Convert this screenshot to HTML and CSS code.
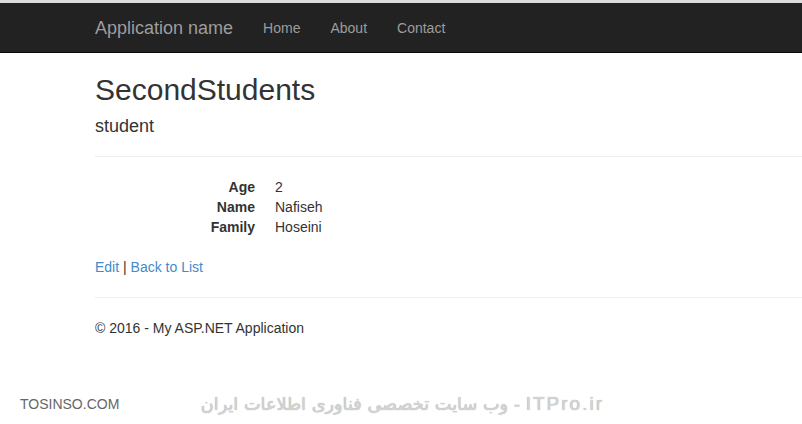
FILE: index.html
```html
<!DOCTYPE html>
<html lang="en">
<head>
  <meta charset="UTF-8" />
  <meta name="viewport" content="width=device-width, initial-scale=1.0"/>
  <title>Details - My ASP.NET Application</title>
  <link rel="stylesheet" href="styles.css">
</head>
<body>
  <div class="top-strip"></div>

  <div class="navbar">
    <div class="container nav-inner">
      <a class="navbar-brand" href="#">Application name</a>
      <ul class="nav">
        <li><a href="#">Home</a></li>
        <li><a href="#">About</a></li>
        <li><a href="#">Contact</a></li>
      </ul>
    </div>
  </div>

  <div class="container body-content">
    <h2>SecondStudents</h2>

    <div>
      <h4>student</h4>
      <hr />
      <dl class="dl-horizontal">
        <dt>Age</dt>
        <dd>2</dd>
        <dt>Name</dt>
        <dd>Nafiseh</dd>
        <dt>Family</dt>
        <dd>Hoseini</dd>
      </dl>
    </div>

    <p>
      <a href="#">Edit</a> |
      <a href="#">Back to List</a>
    </p>

    <hr />
    <footer>
      <p>&copy; 2016 - My ASP.NET Application</p>
    </footer>
  </div>

  <div class="watermark">
    <span class="wm-site">TOSINSO.COM</span>
    <span class="wm-fa" dir="rtl"><span class="wm-latin">ITPro.ir</span> - وب سایت تخصصی فناوری اطلاعات ایران</span>
  </div>
</body>
</html>
```

FILE: styles.css
```css
html, body {
  margin: 0;
  padding: 0;
}

body {
  font-family: "Liberation Sans", Arial, sans-serif;
  font-size: 14px;
  line-height: 20px;
  color: #333;
  background-color: #fff;
  overflow: hidden;
  height: 424px;
  position: relative;
}

a {
  color: #428bca;
  text-decoration: none;
}

.top-strip {
  height: 3px;
  background-color: #dcdcdc;
}

/* page is cut on the right, so the container runs to the edge */
.container {
  margin-left: 80px;
  padding: 0 0 0 15px;
}

/* navbar */
.navbar {
  background-color: #222;
  border-bottom: 1px solid #080808;
  height: 49px;
}

.nav-inner {
  display: flex;
  align-items: center;
}

.navbar-brand {
  color: #9d9d9d;
  font-size: 18px;
  line-height: 20px;
  padding: 15px 15px 14px 0;
}

.nav {
  display: flex;
  list-style: none;
  margin: 0;
  padding: 0;
}

.nav a {
  display: block;
  color: #9d9d9d;
  padding: 15px 15px 14px;
}

/* content */
h2 {
  font-size: 30px;
  font-weight: 500;
  line-height: 33px;
  margin: 20px 0 10px;
}

h4 {
  font-size: 18px;
  font-weight: 500;
  line-height: 20px;
  margin: 10px 0;
}

hr {
  border: 0;
  border-top: 1px solid #eee;
  margin: 20px 0;
}

p {
  margin: 0 0 10px;
}

.dl-horizontal {
  display: grid;
  grid-template-columns: 160px 1fr;
  column-gap: 20px;
  margin: 0 0 20px;
}

.dl-horizontal dt {
  font-weight: bold;
  text-align: right;
}

.dl-horizontal dd {
  margin: 0;
}

/* watermark over the screenshot */
.watermark {
  position: absolute;
  left: 0;
  right: 0;
  top: 391px;
  height: 26px;
  display: flex;
  align-items: center;
}

.wm-site {
  margin-left: 20px;
  font-size: 14px;
  color: #666;
}

.wm-fa {
  margin-left: auto;
  margin-right: 198px;
  font-family: "DejaVu Sans", sans-serif;
  font-size: 17.7px;
  color: #d4d4d4;
  text-shadow: 0 0 1px #999;
}

.wm-latin {
  font-family: "Liberation Sans", Arial, sans-serif;
  font-size: 19px;
  letter-spacing: 2px;
}
```
